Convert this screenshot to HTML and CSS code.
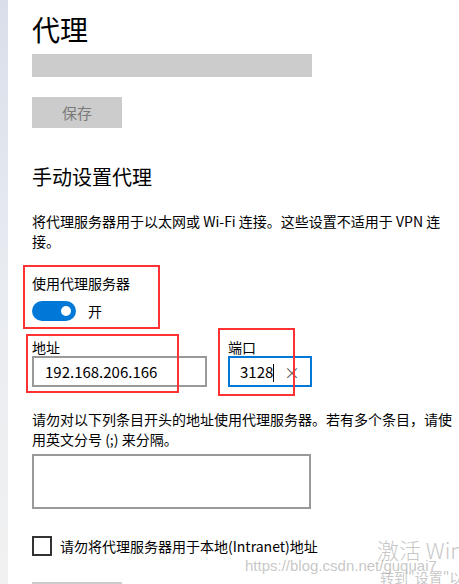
FILE: index.html
```html
<!DOCTYPE html>
<html lang="zh-CN">
<head>
    <meta charset="UTF-8">
    <title>代理</title>
    <link rel="stylesheet" href="styles.css">
</head>
<body>
<div class="window">
    <div class="side-strip"></div>

    <main class="page">
        <h1>代理</h1>
        <div class="blank-bar"></div>
        <button class="btn-save" disabled>保存</button>

        <h2>手动设置代理</h2>
        <p class="desc">将代理服务器用于以太网或 Wi-Fi 连接。这些设置不适用于 VPN 连接。</p>

        <div class="mark mark-switch">
            <div class="label">使用代理服务器</div>
            <div class="switch-row">
                <span class="toggle"><span class="knob"></span></span>
                <span>开</span>
            </div>
        </div>

        <div class="fields">
            <div class="field field-addr">
                <div class="label">地址</div>
                <div class="input input-addr">192.168.206.166</div>
                <span class="mark-box mark-addr"></span>
            </div>
            <div class="field field-port">
                <div class="label">端口</div>
                <div class="input input-port">
                    <span>3128<span class="caret"></span></span>
                    <span class="clear">×</span>
                </div>
                <span class="mark-box mark-port"></span>
            </div>
        </div>

        <p class="desc desc-exclude">请勿对以下列条目开头的地址使用代理服务器。若有多个条目，请使用英文分号 (;) 来分隔。</p>
        <div class="textarea"></div>

        <label class="check-row">
            <span class="checkbox"></span>
            <span>请勿将代理服务器用于本地(Intranet)地址</span>
        </label>

        <div class="btn-bottom"></div>
    </main>

    <div class="watermark">
        <div class="wm-title">激活 Windows</div>
        <div class="wm-url">https://blog.csdn.net/guquai7</div>
        <div class="wm-sub">转到"设置"以激活 Windows。</div>
    </div>
</div>
</body>
</html>
```

FILE: styles.css
```css
body {
    margin: 0;
    font-family: "Noto Sans CJK SC", "Noto Sans", sans-serif;
    color: #000;
    background: #fff;
}
.window {
    position: relative;
    display: flex;
    height: 584px;
    overflow: hidden;
}
.side-strip {
    width: 8px;
    flex-shrink: 0;
    background: linear-gradient(#d9dfea, #e9ecf1 50%, #f1f1f1);
}
.page {
    flex: 1;
    padding: 11px 5px 0 24px;
    font-size: 14px;
    line-height: 20px;
}
h1 {
    margin: 0 0 7px;
    font-size: 28px;
    line-height: 36px;
    font-weight: 400;
}
.blank-bar {
    width: 280px;
    height: 23px;
    background: #ccc;
}
.btn-save {
    display: block;
    margin-top: 20px;
    width: 90px;
    height: 31px;
    border: none;
    background: #ccc;
    color: #7a7a7a;
    font: inherit;
    font-size: 15px;
    padding: 0;
}
h2 {
    margin: 35px 0 20px;
    font-size: 20px;
    line-height: 28px;
    font-weight: 400;
}
.desc {
    margin: 0;
}

/* red annotation boxes */
.mark {
    border: 2px solid #f33;
}
.mark-switch {
    margin: 14px 0 0 -9px;
    width: 126px;
    padding: 6px 0 6px 7px;
}
.label {
    line-height: 20px;
}
.switch-row {
    display: flex;
    align-items: center;
    gap: 12px;
    margin-top: 8px;
}
.toggle {
    display: flex;
    justify-content: flex-end;
    align-items: center;
    width: 44px;
    height: 20px;
    padding-right: 5px;
    box-sizing: border-box;
    border-radius: 10px;
    background: #0078d7;
}
.knob {
    width: 10px;
    height: 10px;
    border-radius: 50%;
    background: #fff;
}

.fields {
    display: flex;
    gap: 21px;
    margin-top: 9px;
}
.field {
    position: relative;
}
.field .label {
    line-height: 18px;
}
.input {
    box-sizing: border-box;
    height: 31px;
    border: 2px solid #999;
    display: flex;
    align-items: center;
    font-size: 15px;
}
.input-addr {
    width: 175px;
    padding-left: 11px;
}
.input-port {
    width: 84px;
    padding: 0 10px 0 10px;
    border-color: #0078d7;
    justify-content: space-between;
}
.caret {
    display: inline-block;
    width: 1px;
    height: 18px;
    background: #000;
    vertical-align: -4px;
}
.clear {
    color: #666;
    font-size: 16px;
}
.mark-box {
    position: absolute;
    border: 2px solid #f33;
    box-sizing: border-box;
}
.mark-addr {
    left: -6px;
    top: -4px;
    width: 153px;
    height: 59px;
}
.mark-port {
    left: -10px;
    top: -10px;
    width: 77px;
    height: 68px;
}

.desc-exclude {
    margin-top: 22px;
}
.textarea {
    margin-top: 5px;
    width: 279px;
    height: 55px;
    box-sizing: border-box;
    border: 2px solid #999;
}
.check-row {
    display: flex;
    align-items: center;
    gap: 8px;
    margin-top: 27px;
}
.checkbox {
    width: 20px;
    height: 20px;
    box-sizing: border-box;
    border: 2px solid #333;
}
.btn-bottom {
    margin-top: 26px;
    width: 90px;
    height: 31px;
    background: #ccc;
}

.watermark {
    position: absolute;
    left: 245px;
    top: 538px;
    color: rgba(150, 150, 150, 0.55);
    white-space: nowrap;
    pointer-events: none;
}
.wm-title {
    margin-left: 132px;
    font-size: 22px;
    line-height: 22px;
    font-weight: 300;
}
.wm-url {
    font-family: "Liberation Sans", sans-serif;
    font-size: 15px;
    line-height: 14px;
    margin-top: -1px;
}
.wm-sub {
    margin-left: 135px;
    margin-top: -4px;
    font-size: 14px;
    line-height: 16px;
}
```
